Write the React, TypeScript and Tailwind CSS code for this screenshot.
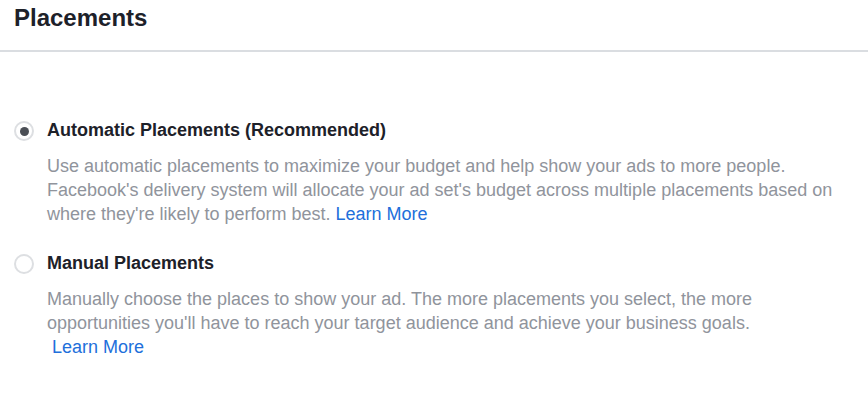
import { useState } from "react";

const OPTIONS = [
  {
    id: "automatic",
    label: "Automatic Placements (Recommended)",
    body: "Use automatic placements to maximize your budget and help show your ads to more people. Facebook's delivery system will allocate your ad set's budget across multiple placements based on where they're likely to perform best.",
    wrapLink: false
  },
  {
    id: "manual",
    label: "Manual Placements",
    body: "Manually choose the places to show your ad. The more placements you select, the more opportunities you'll have to reach your target audience and achieve your business goals.",
    wrapLink: true
  }
] as const;

function Radio({ checked }: { checked: boolean }) {
  return (
    <span className="mt-[3px] flex h-5 w-5 shrink-0 items-center justify-center rounded-full border-2 border-[#dddfe2] bg-white">
      {checked && <span className="h-[9px] w-[9px] rounded-full bg-[#4b4f56]" />}
    </span>
  );
}

export default function App() {
  const [selected, setSelected] = useState("automatic");

  return (
    <div className="min-h-[402px] w-full bg-white font-['Liberation_Sans',Arial,sans-serif] text-[#1d2129]">
      <div className="border-b-2 border-[#dadde1] px-[14px] pb-[18px] pt-1">
        <h2 className="text-[24px] font-bold leading-[28px]">Placements</h2>
      </div>

      <div className="flex flex-col gap-[25px] pl-[14px] pr-[28px] pt-[66px]">
        {OPTIONS.map((opt) => (
          <div
            key={opt.id}
            className="flex cursor-pointer gap-[13px]"
            onClick={() => setSelected(opt.id)}
          >
            <Radio checked={selected === opt.id} />
            <div className="flex flex-col gap-3">
              <p className="text-[18px] font-bold leading-6">{opt.label}</p>
              <p className="text-[18px] leading-6 text-[#90949c]">
                {opt.body}{" "}
                {opt.wrapLink ? (
                  <span className="inline-block">
                    {"\u00a0"}
                    <a href="#" className="text-[#216fdb]">
                      Learn More
                    </a>
                  </span>
                ) : (
                  <a href="#" className="text-[#216fdb]">
                    Learn More
                  </a>
                )}
              </p>
            </div>
          </div>
        ))}
      </div>
    </div>
  );
}
